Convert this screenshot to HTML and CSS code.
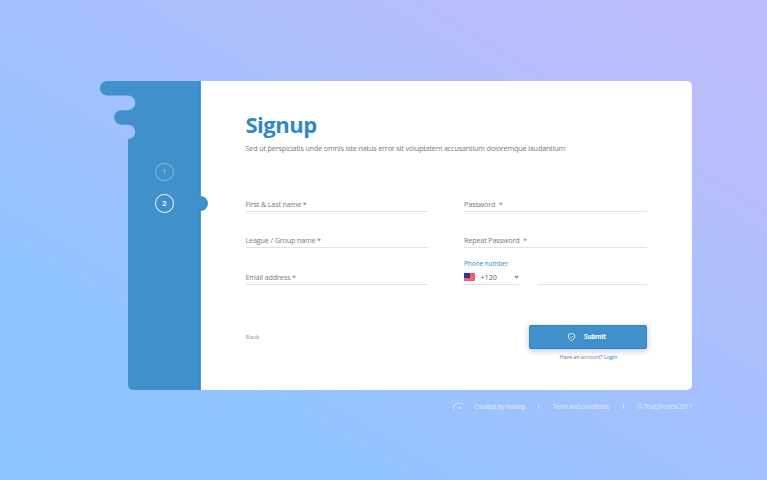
FILE: index.html
```html
<!DOCTYPE html>
<html lang="en">
<head>
<meta charset="utf-8">
<title>Signup</title>
<link rel="stylesheet" href="styles.css">
</head>
<body>
<main class="page">
  <section class="card">
    <aside class="sidebar">
      <svg class="shape" width="101" height="309" viewBox="0 0 101 309" aria-hidden="true">
        <path fill="#4090cc" d="M100.5 0H7.3a7.3 7.3 0 0 0 0 14.6H28a7.2 7.2 0 0 1 0 14.6H21.4a7.25 7.25 0 0 0 0 14.5H28a7.25 7.25 0 0 1 0 14.5V304a5 5 0 0 0 5 5H100.5Z"/>
        <path d="M100 0V309" stroke="#2887cc"/>
      </svg>
      <ol class="steps">
        <li class="step">1</li>
        <li class="step active">2</li>
      </ol>
      <span class="pointer"></span>
    </aside>
    <form class="content">
      <h1>Signup</h1>
      <p class="lead">Sed ut perspiciatis unde omnis iste natus error sit voluptatem accusantium doloremque laudantium</p>
      <div class="fields">
        <label class="field"><span>First &amp; Last name *</span></label>
        <label class="field"><span>Password&nbsp; *</span></label>
        <label class="field"><span>League / Group name *</span></label>
        <label class="field"><span>Repeat Password&nbsp; *</span></label>
        <label class="field"><span>Email address *</span></label>
        <div class="phone">
          <span class="phone-label">Phone number</span>
          <div class="code">
            <svg width="11" height="8" viewBox="0 0 11 8"><rect width="11" height="8" rx=".8" fill="#fb535e"/><path d="M0 2h11M0 4.5h11M0 6.7h11" stroke="#ff7d81" stroke-width=".6"/><path d="M.6 0H6v5H0V.6Z" fill="#2b2da5"/><path d="M1.2 1.5h4M1.2 3.4h4" stroke="#6263c1" stroke-width=".5" stroke-dasharray=".6 .7"/></svg>
            <span class="prefix">+120</span>
            <svg class="chevron" width="5" height="4" viewBox="0 0 5 4"><path d="M.8 1 2.5 2.6 4.2 1" fill="none" stroke="#3d8ed0" stroke-width="1.2"/></svg>
          </div>
          <div class="number"></div>
        </div>
      </div>
      <div class="actions">
        <a class="back">Back</a>
        <div class="send">
          <button type="button" class="submit">
            <svg width="7" height="8" viewBox="0 0 7 8" fill="none" stroke="#fff" stroke-width=".75"><path d="M3.5.5 6.5 1.4V4.1C6.5 5.8 5.2 6.9 3.5 7.5 1.8 6.9.5 5.8.5 4.1V1.4Z"/><path d="M2.2 3.8 3.2 4.8 4.9 3"/></svg>
            <span>Submit</span>
          </button>
          <p class="account">Have an account? <a class="login">Login</a></p>
        </div>
      </div>
    </form>
  </section>
  <footer class="footer">
    <svg width="14" height="9" viewBox="0 0 14 9"><path d="M1.9 8.3C-.5 5.4 1.5 1.2 6.2.8 9.4.5 12 1.4 13.3 3.3 10.8 1.3 8 .9 5.5 1.5 2 2.5.9 5.2 1.9 8.3Z" fill="#fff" stroke="#fff" stroke-width=".2" opacity=".7"/><circle cx="7.7" cy="6.1" r="1" fill="#fff"/></svg>
    <span class="created">Created by Hestep</span>
    <i></i>
    <span>Term and conditions</span>
    <i></i>
    <span>© True2Forms 2017</span>
  </footer>
</main>
</body>
</html>
```
FILE: styles.css
```css
* { box-sizing: border-box; }
body {
  margin: 0;
  font-family: "Open Sans", "Noto Sans", sans-serif;
  font-size: 7.2px;
  letter-spacing: -.15px;
  color: #777780;
}
.page {
  width: 767px;
  height: 480px;
  padding: 81px 75px 0 128px;
  overflow: hidden;
  background: linear-gradient(31deg, #8ec4ff 0%, #8fc4ff 23%, #b8bdfc 79%, #bebcf8 100%);
}
.card { display: flex; height: 309px; }
.sidebar {
  position: relative;
  width: 72.5px;
  padding-top: 81.5px;
}
.shape { position: absolute; left: -28px; top: 0; }
.steps {
  position: relative;
  display: flex;
  flex-direction: column;
  align-items: center;
  gap: 13px;
  margin: 0;
  padding: 0;
  list-style: none;
}
.step {
  display: flex;
  align-items: center;
  justify-content: center;
  width: 18.5px;
  height: 18.5px;
  border: 1px solid #87b9e0;
  border-radius: 50%;
  color: #9bc5e6;
  font-size: 7px;
  font-weight: 600;
  letter-spacing: 0;
}
.step.active { border: 1.5px solid #fff; color: #fff; font-weight: 700; }
.pointer {
  position: absolute;
  left: 65px;
  top: 115px;
  width: 15px;
  height: 15px;
  border-radius: 50%;
  background: #4090cc;
}
.content {
  flex: 1;
  padding: 27px 45px 0;
  background: #fff;
  border-radius: 0 5px 5px 0;
}
h1 {
  margin: 0;
  font-size: 22px;
  line-height: 32px;
  font-weight: 700;
  letter-spacing: -.5px;
  color: #2f88cb;
}
.lead { margin: 2.5px 0 0; line-height: 10px; white-space: nowrap; }
.fields {
  display: grid;
  grid-template-columns: 182.5px 183px;
  grid-template-rows: repeat(3, 36.5px);
  column-gap: 36px;
  margin-top: 22.5px;
}
.field {
  display: flex;
  align-items: flex-end;
  padding-bottom: 2px;
  line-height: 10px;
  border-bottom: 1px solid #e2e2e6;
  white-space: nowrap;
}
.phone {
  display: grid;
  grid-template-columns: 55px 109px;
  grid-template-rows: 1fr 13px;
  column-gap: 19px;
}
.phone-label {
  grid-column: 1 / -1;
  align-self: end;
  margin-bottom: 2.5px;
  line-height: 10px;
  font-size: 6.5px;
  letter-spacing: -.1px;
  color: #2f88cb;
}
.code, .number { display: flex; align-items: center; border-bottom: 1px solid #e2e2e6; }
.code { padding-bottom: 1px; color: #606068; letter-spacing: 0; }
.prefix { margin-left: 5.5px; }
.chevron { margin-left: auto; }
.actions { display: flex; justify-content: space-between; margin-top: 40.3px; }
.back { margin-top: 7px; font-size: 6px; line-height: 10px; font-weight: 700; letter-spacing: -.05px; color: #b7bac9; }
.send { width: 118.5px; }
.submit {
  display: flex;
  align-items: center;
  width: 100%;
  height: 24px;
  padding: 0 0 0 38.5px;
  border: 1px solid #2986cc;
  border-radius: 1.5px;
  background: #4090cc;
  box-shadow: 0 2px 6px rgba(75, 75, 170, .32);
  color: #fff;
  font: 700 6.5px "Open Sans", sans-serif;
  letter-spacing: -.2px;
}
.submit span { margin-left: 9px; }
.account { margin: 4px 0 0 31px; font-size: 5.5px; line-height: 8px; letter-spacing: -.12px; white-space: nowrap; }
.login { color: #2f88cb; }
.footer {
  display: flex;
  align-items: center;
  justify-content: flex-end;
  height: 10px;
  margin-top: 11px;
  font-size: 6.3px;
  letter-spacing: -.2px;
  color: rgba(255, 255, 255, .72);
  white-space: nowrap;
}
.created { margin-left: 8px; }
.footer i { width: 1px; height: 5px; margin: 0 13.3px; background: rgba(255, 255, 255, .5); }
```
